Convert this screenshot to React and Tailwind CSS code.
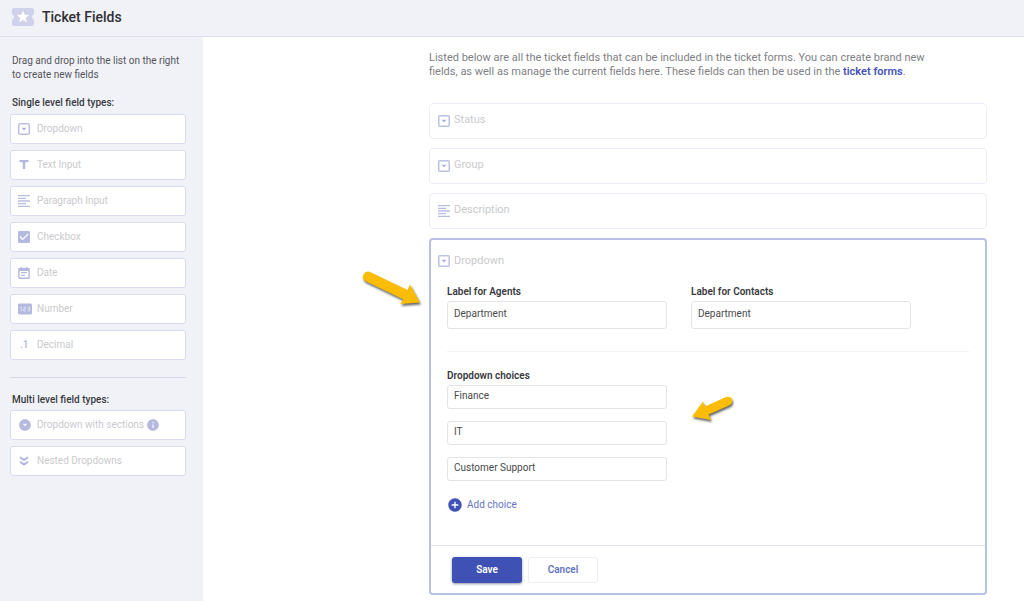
import React, { useState } from 'react';
import { MdCheckBox, MdArrowDropDownCircle, MdInfo, MdAddCircle } from 'react-icons/md';

const TicketIcon = () => (
  <svg viewBox="0 0 22 18" className="w-[22px] h-[18px]" aria-hidden="true">
    <path
      d="M2 0h18a2 2 0 0 1 2 2v4.2a3 3 0 0 0 0 5.6V16a2 2 0 0 1-2 2H2a2 2 0 0 1-2-2v-4.2a3 3 0 0 0 0-5.6V2a2 2 0 0 1 2-2z"
      fill="#cfd2ea"
    />
    <path
      d="M11 2.600l1.700 4.100 4.400.4-3.300 2.900 1 4.300-3.800-2.300-3.800 2.300 1-4.300-3.300-2.900 4.400-.4z"
      fill="#fff"
    />
  </svg>
);

const DropdownIcon = () => (
  <svg viewBox="0 0 12 12" className="w-3 h-3" aria-hidden="true">
    <rect x="0.75" y="0.75" width="10.5" height="10.5" rx="1" fill="none" stroke="#bcc1e4" strokeWidth="1.5" />
    <path d="M3.5 4.8h5L6 7.4z" fill="#a9b0dc" />
  </svg>
);

const TextIcon = () => (
  <svg viewBox="0 0 12 12" className="w-3 h-3" aria-hidden="true">
    <path d="M1.5 1h9v2.300H7.200V10H4.800V3.300H1.500z" fill="#b3b9df" />
  </svg>
);

const ParagraphIcon = () => (
  <svg viewBox="0 0 12 12" className="w-3 h-3" aria-hidden="true">
    <path d="M0 .7h12M0 3.400h8M0 6h12M0 8.600h8M0 11.300h12" stroke="#b9bee1" strokeWidth="1.300" />
  </svg>
);

const DateIcon = () => (
  <svg viewBox="0 0 12 12" className="w-3 h-3" aria-hidden="true">
    <path d="M2.500 0h1.500v1h4V0h1.500v1h1a1.300 1.300 0 0 1 1.300 1.300v8.400a1.300 1.300 0 0 1-1.300 1.300h-9a1.300 1.300 0 0 1-1.300-1.300V2.300A1.300 1.300 0 0 1 1.500 1h1z" fill="#b3b9df" />
    <path d="M1.600 4h8.800v6.500H1.600z" fill="#fff" />
    <path d="M3 5.700h6M3 8.300h4" stroke="#b3b9df" strokeWidth="1.300" />
  </svg>
);

const NumberIcon = () => (
  <svg viewBox="0 0 14 12" className="w-3.5 h-3" aria-hidden="true">
    <rect y="0.5" width="14" height="11" rx="1.500" fill="#b3b9df" />
    <path
      d="M2.300 4.500l1-.6v4.400M5.600 4.200h2v1.900h-2v1.900h2.200M9.600 4.200h2v3.800h-2M9.600 6.100h2"
      fill="none"
      stroke="#e8eaf5"
      strokeWidth=".8"
    />
  </svg>
);

const NestedIcon = () => (
  <svg viewBox="0 0 12 12" className="w-3 h-3" aria-hidden="true">
    <path d="M2 2.200l4 2.800 4-2.800M2 6.700l4 2.800 4-2.800" fill="none" stroke="#b0b6de" strokeWidth="2" />
  </svg>
);

const singleLevelTypes = [
  { label: 'Dropdown', icon: <DropdownIcon /> },
  { label: 'Text Input', icon: <TextIcon /> },
  { label: 'Paragraph Input', icon: <ParagraphIcon /> },
  { label: 'Checkbox', icon: <MdCheckBox className="w-4 h-4 -m-0.5" /> },
  { label: 'Date', icon: <DateIcon /> },
  { label: 'Number', icon: <NumberIcon /> },
  { label: 'Decimal', icon: <span className="text-[10px] font-medium pl-0.5">.1</span> },
];

const multiLevelTypes = [
  { label: 'Dropdown with sections', icon: <MdArrowDropDownCircle className="w-3.5 h-3.5" />, info: true },
  { label: 'Nested Dropdowns', icon: <NestedIcon /> },
];

const existingFields = [
  { label: 'Status', icon: <DropdownIcon /> },
  { label: 'Group', icon: <DropdownIcon /> },
  { label: 'Description', icon: <ParagraphIcon /> },
];

const FieldType = ({ type }) => (
  <li
    draggable
    className="flex items-center h-[30px] pl-[7px] pb-px rounded-[3px] border border-[#d8dbf0] bg-white text-[10px] text-[#cacacd] cursor-move"
  >
    <span className="flex items-center w-[19px] text-[#b3b9df]">{type.icon}</span>
    <span>{type.label}</span>
    {type.info && <MdInfo className="w-3.5 h-3.5 ml-0.5 text-[#b3b9df]" />}
  </li>
);

const TextField = ({ id, label, value, onChange }) => (
  <div className="w-[220px]">
    <label htmlFor={id} className="block mb-[3px] text-[10px] leading-3 font-semibold text-[#3a3a3e]">
      {label}
    </label>
    <input
      id={id}
      type="text"
      value={value}
      onChange={(e) => onChange(e.target.value)}
      className="block w-full h-7 px-1.5 pb-1 rounded-[3px] border border-[#e4e4e6] text-[10px] text-[#4a4a4e] outline-none"
    />
  </div>
);

const Arrow = ({ className, d, viewBox }) => (
  <svg viewBox={viewBox} className={className} aria-hidden="true">
    <path d={d} fill="#fbbc04" />
  </svg>
);

const App = () => {
  const [agentLabel, setAgentLabel] = useState('Department');
  const [contactLabel, setContactLabel] = useState('Department');
  const [choices, setChoices] = useState(['Finance', 'IT', 'Customer Support']);

  const updateChoice = (index, value) => {
    setChoices(choices.map((choice, i) => (i === index ? value : choice)));
  };

  return (
    <div className="min-h-screen flex flex-col bg-white font-[Roboto,sans-serif] text-[#3a3a3e]">
      {/* Header */}
      <header className="flex items-center gap-2 h-[37px] pl-3 pb-[3px] bg-[#f1f2f8] border-b border-[#dfe1ee]">
        <TicketIcon />
        <h1 className="text-[14px] leading-5 font-medium text-[#2f2f33]">Ticket Fields</h1>
      </header>

      <div className="flex flex-1">
        {/* Sidebar */}
        <aside className="w-[203px] flex-shrink-0 pl-2.5 pr-[17px] pt-[17px] bg-[#f1f2f8]">
          <p className="pl-0.5 text-[10px] leading-[14px] text-[#55555a]">
            Drag and drop into the list on the right to create new fields
          </p>
          <h2 className="mt-[15px] pl-0.5 text-[10px] leading-3 font-medium">Single level field types:</h2>
          <ul className="mt-[5px] flex flex-col gap-1.5">
            {singleLevelTypes.map((type) => (
              <FieldType key={type.label} type={type} />
            ))}
          </ul>
          <hr className="mt-[17px] border-[#d5d8e6]" />
          <h2 className="mt-4 pl-0.5 text-[10px] leading-3 font-medium">Multi level field types:</h2>
          <ul className="mt-1 flex flex-col gap-1.5">
            {multiLevelTypes.map((type) => (
              <FieldType key={type.label} type={type} />
            ))}
          </ul>
        </aside>

        {/* Field list */}
        <main className="flex-1 min-w-0 pl-[226px] pr-[37px] pt-3.5 pb-1.5">
          <p className="max-w-[520px] text-[11px] leading-[14px] text-[#808085]">
            Listed below are all the ticket fields that can be included in the ticket forms. You can create brand new
            fields, as well as manage the current fields here. These fields can then be used in the{' '}
            <a href="#forms" className="font-semibold text-[#4553b8]">ticket forms</a>.
          </p>

          <ul className="mt-6 flex flex-col gap-[9px]">
            {existingFields.map((field) => (
              <li
                key={field.label}
                className="flex items-center gap-1 h-9 pl-2 pb-px rounded-[4px] border border-[#ecedf6] text-[11px] text-[#cacacd]"
              >
                {field.icon}
                <span>{field.label}</span>
              </li>
            ))}
          </ul>

          <form className="relative mt-[9px] rounded-[4px] border-2 border-[#b9c0e6]" onSubmit={(e) => e.preventDefault()}>
            <div className="flex items-center gap-1 h-[42px] pl-[7px] text-[11px] text-[#cacacd]">
              <DropdownIcon />
              <span>Dropdown</span>
            </div>

            <div className="mx-4 pt-1 pb-[22px] flex gap-6 border-b border-[#f2f2f4]">
              <TextField id="agent-label" label="Label for Agents" value={agentLabel} onChange={setAgentLabel} />
              <TextField id="contact-label" label="Label for Contacts" value={contactLabel} onChange={setContactLabel} />
            </div>

            <fieldset className="mx-4 pt-[18px] pb-8">
              <legend className="float-left w-full mb-[3px] text-[10px] leading-3 font-semibold">Dropdown choices</legend>
              <div className="clear-both flex flex-col gap-3 w-[220px]">
                {choices.map((choice, index) => (
                  <input
                    key={index}
                    type="text"
                    aria-label={`Choice ${index + 1}`}
                    value={choice}
                    onChange={(e) => updateChoice(index, e.target.value)}
                    className="h-6 px-1.5 pb-[3px] rounded-[3px] border border-[#e4e4e6] text-[10px] text-[#4a4a4e] outline-none"
                  />
                ))}
              </div>
              <button
                type="button"
                onClick={() => setChoices([...choices, ''])}
                className="mt-4 flex items-center gap-1 text-[10px] leading-4 text-[#6673c4]"
              >
                <MdAddCircle className="w-4 h-4 text-[#3f51b5]" />
                Add choice
              </button>
            </fieldset>

            <div className="flex gap-1.5 pl-[21px] pt-[11px] pb-2.5 border-t border-[#e2e2ea] text-[10px] font-semibold">
              <button
                type="submit"
                className="w-[70px] h-[26px] pb-px rounded-[3px] bg-[#3f51b5] text-white shadow-sm shadow-gray-400"
              >
                Save
              </button>
              <button
                type="button"
                className="w-[70px] h-[26px] pb-px rounded-[3px] border border-[#ededf2] text-[#6673c4]"
              >
                Cancel
              </button>
            </div>

            {/* Pointer arrows */}
            <Arrow
              viewBox="0 0 60 36"
              d="M2.500 4.500Q5 0 10 2.500L46.500 20 49 14.500 59 32.500 39 34 42.500 29.500 4 11Q.5 8.500 2.500 4.500z"
              className="absolute left-[-70px] top-[30px] w-[60px] h-9 drop-shadow-[1px_2px_1px_rgba(0,0,0,0.6)]"
            />
            <Arrow
              viewBox="0 0 44 26"
              d="M1 20.500L12 5.500 14 10.500 35 1Q40 0 41 3.500 42 7.500 38 9.500L17.500 18.500 20 24z"
              className="absolute left-[260px] top-[156px] w-11 h-[26px] drop-shadow-[1px_2px_1px_rgba(0,0,0,0.6)]"
            />
          </form>
        </main>
      </div>
    </div>
  );
};

export default App;
